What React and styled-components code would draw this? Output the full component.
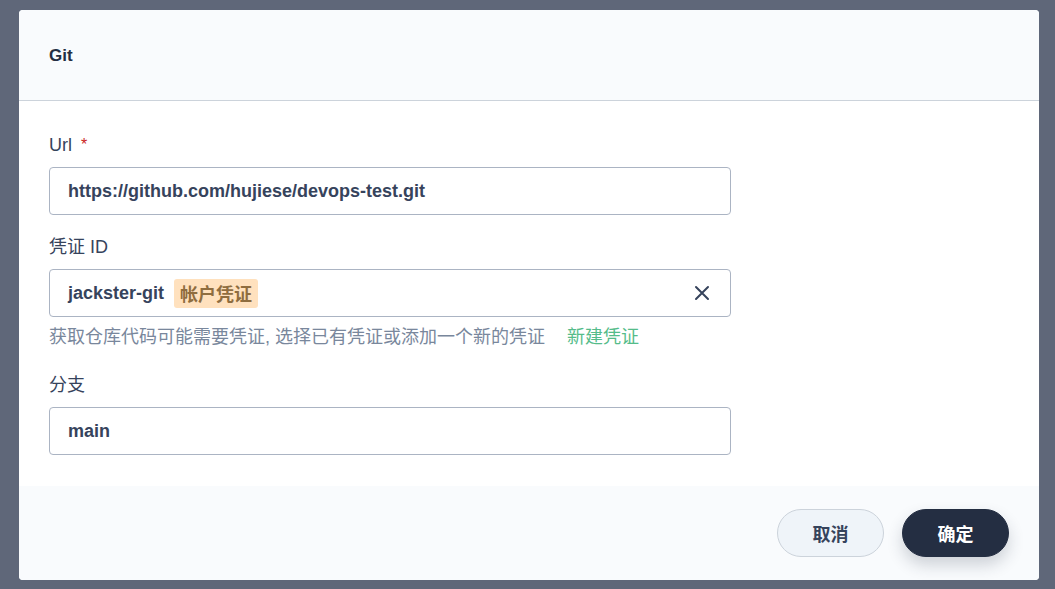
import React from "react";
import styled, { createGlobalStyle } from "styled-components";

const Global = createGlobalStyle`
  html, body {
    margin: 0;
    padding: 0;
    background: #5f6779;
    font-family: "Liberation Sans", Arial, "Noto Sans CJK SC", sans-serif;
  }
  * { box-sizing: border-box; }
`;

const Page = styled.div`
  width: 1055px;
  height: 589px;
  padding: 10px 16px 9px 19px;
  display: flex;
`;

const Modal = styled.div`
  flex: 1;
  background: #fff;
  border-radius: 4px;
  display: flex;
  flex-direction: column;
  overflow: hidden;
`;

const Header = styled.div`
  height: 91px;
  background: #f9fbfd;
  border-bottom: 1px solid #ccd3db;
  display: flex;
  align-items: center;
  padding: 1px 30px 0;
`;

const Title = styled.h4`
  margin: 0;
  font-size: 17px;
  font-weight: 700;
  color: #242e42;
`;

const Body = styled.div`
  flex: 1;
  padding: 32px 30px 0;
  display: flex;
  flex-direction: column;
`;

const Field = styled.div`
  width: 682px;
  margin-bottom: ${(p) => p.$gap || 0}px;
`;

const Label = styled.div`
  font-size: 18px;
  line-height: 24px;
  color: #36435c;
  margin-bottom: 10px;
  display: flex;
  align-items: center;
`;

const Required = styled.span`
  color: #ca2621;
  margin-left: 9px;
  font-size: 16px;
`;

const Input = styled.div`
  height: 48px;
  border: 1px solid #abb4c3;
  border-radius: 4px;
  display: flex;
  align-items: center;
  padding: 0 18px;
  font-size: 18px;
  font-weight: 700;
  color: #36435c;
`;

const Tag = styled.span`
  margin-left: 10px;
  background: #ffe1be;
  color: #8f6d3f;
  border-radius: 3px;
  padding: 0 6px;
  height: 29px;
  display: inline-flex;
  align-items: center;
  font-weight: 700;
`;

const Clear = styled.button`
  margin-left: auto;
  margin-right: 2px;
  border: none;
  background: none;
  padding: 0;
  display: flex;
  cursor: pointer;
  color: #36435c;
`;

const Help = styled.div`
  margin-top: 8px;
  font-size: 18px;
  line-height: 24px;
  color: #79879c;
`;

const Link = styled.a`
  color: #55bc8a;
  margin-left: 22px;
  text-decoration: none;
  cursor: pointer;
`;

const Footer = styled.div`
  height: 94px;
  background: #f9fbfd;
  display: flex;
  align-items: center;
  justify-content: flex-end;
  gap: 18px;
  padding: 0 30px 1px;
`;

const Button = styled.button`
  width: 107px;
  height: 48px;
  border-radius: 24px;
  font-family: inherit;
  font-size: 18px;
  font-weight: 700;
  cursor: pointer;
  border: 1px solid ${(p) => (p.$primary ? "#242e42" : "#ccd3db")};
  background: ${(p) => (p.$primary ? "#242e42" : "#eff4f9")};
  color: ${(p) => (p.$primary ? "#fff" : "#36435c")};
  box-shadow: ${(p) => (p.$primary ? "0 8px 16px 0 rgba(36, 46, 66, 0.2)" : "none")};
`;

export default function App() {
  return (
    <>
      <Global />
      <Page>
        <Modal>
          <Header>
            <Title>Git</Title>
          </Header>
          <Body>
            <Field $gap={20}>
              <Label>
                Url<Required>*</Required>
              </Label>
              <Input>https://github.com/hujiese/devops-test.git</Input>
            </Field>
            <Field $gap={24}>
              <Label>凭证 ID</Label>
              <Input>
                jackster-git
                <Tag>帐户凭证</Tag>
                <Clear>
                  <svg width="16" height="16" viewBox="0 0 16 16" fill="none">
                    <path d="M2 2L14 14M14 2L2 14" stroke="currentColor" strokeWidth="2" strokeLinecap="round" />
                  </svg>
                </Clear>
              </Input>
              <Help>
                获取仓库代码可能需要凭证, 选择已有凭证或添加一个新的凭证
                <Link>新建凭证</Link>
              </Help>
            </Field>
            <Field>
              <Label>分支</Label>
              <Input>main</Input>
            </Field>
          </Body>
          <Footer>
            <Button>取消</Button>
            <Button $primary>确定</Button>
          </Footer>
        </Modal>
      </Page>
    </>
  );
}
